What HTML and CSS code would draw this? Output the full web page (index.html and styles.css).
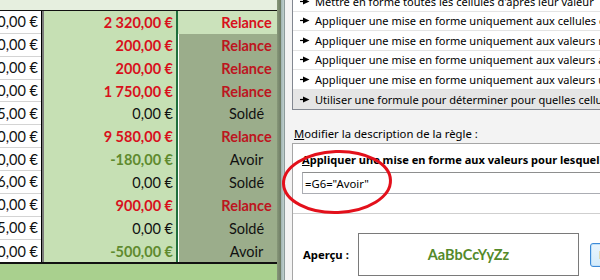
FILE: index.html
```html
<!DOCTYPE html>
<html lang="fr">
<head>
<meta charset="utf-8">
<link rel="stylesheet" href="styles.css">
</head>
<body>
<div class="screen">
  <div class="sheet">
    <div class="top"></div>
    <div class="grid">
      <div class="col col-a">
        <div class="cell">1 250,00 €</div>
        <div class="cell">1 200,00 €</div>
        <div class="cell">1 200,00 €</div>
        <div class="cell">1 750,00 €</div>
        <div class="cell">1 245,00 €</div>
        <div class="cell">9 580,00 €</div>
        <div class="cell">1 320,00 €</div>
        <div class="cell">1 256,00 €</div>
        <div class="cell">1 900,00 €</div>
        <div class="cell">1 125,00 €</div>
        <div class="cell">1 500,00 €</div>
      </div>
      <div class="col col-b">
        <div class="cell red">2 320,00 €</div>
        <div class="cell red">200,00 €</div>
        <div class="cell red">200,00 €</div>
        <div class="cell red">1 750,00 €</div>
        <div class="cell">0,00 €</div>
        <div class="cell red">9 580,00 €</div>
        <div class="cell green">-180,00 €</div>
        <div class="cell">0,00 €</div>
        <div class="cell red">900,00 €</div>
        <div class="cell">0,00 €</div>
        <div class="cell green">-500,00 €</div>
      </div>
      <div class="col col-c">
        <div class="cell active red">Relance</div>
        <div class="cell red">Relance</div>
        <div class="cell red">Relance</div>
        <div class="cell red">Relance</div>
        <div class="cell">Soldé</div>
        <div class="cell red">Relance</div>
        <div class="cell">Avoir</div>
        <div class="cell">Soldé</div>
        <div class="cell red">Relance</div>
        <div class="cell">Soldé</div>
        <div class="cell">Avoir</div>
      </div>
    </div>
    <div class="band"></div>
  </div>
  <div class="frame"><div class="shade"></div><div class="edge"></div></div>
  <div class="dialog">
    <div class="list">
      <div class="item"><svg class="arrow" viewBox="0 0 10 7" width="10" height="7"><path d="M0 3.5h4" stroke="#000" stroke-width="1.2"/><polygon points="3,0.5 9.5,3.5 3,6.5" fill="#000"/></svg>Mettre en forme toutes les cellules d'après leur valeur</div>
      <div class="item"><svg class="arrow" viewBox="0 0 10 7" width="10" height="7"><path d="M0 3.5h4" stroke="#000" stroke-width="1.2"/><polygon points="3,0.5 9.5,3.5 3,6.5" fill="#000"/></svg>Appliquer une mise en forme uniquement aux cellules contenant</div>
      <div class="item"><svg class="arrow" viewBox="0 0 10 7" width="10" height="7"><path d="M0 3.5h4" stroke="#000" stroke-width="1.2"/><polygon points="3,0.5 9.5,3.5 3,6.5" fill="#000"/></svg>Appliquer une mise en forme uniquement aux valeurs rangées parmi les premières</div>
      <div class="item"><svg class="arrow" viewBox="0 0 10 7" width="10" height="7"><path d="M0 3.5h4" stroke="#000" stroke-width="1.2"/><polygon points="3,0.5 9.5,3.5 3,6.5" fill="#000"/></svg>Appliquer une mise en forme uniquement aux valeurs au-dessus ou en dessous</div>
      <div class="item"><svg class="arrow" viewBox="0 0 10 7" width="10" height="7"><path d="M0 3.5h4" stroke="#000" stroke-width="1.2"/><polygon points="3,0.5 9.5,3.5 3,6.5" fill="#000"/></svg>Appliquer une mise en forme uniquement aux valeurs uniques ou aux doublons</div>
      <div class="item sel"><svg class="arrow" viewBox="0 0 10 7" width="10" height="7"><path d="M0 3.5h4" stroke="#000" stroke-width="1.2"/><polygon points="3,0.5 9.5,3.5 3,6.5" fill="#000"/></svg>Utiliser une formule pour déterminer pour quelles cellules le format sera appliqué</div>
    </div>
    <div class="label"><u>M</u>odifier la description de la règle :</div>
    <div class="group">
      <div class="heading"><u>A</u>ppliquer une mise en forme aux valeurs pour lesquelles cette formule est vraie :</div>
      <div class="input">=G6="Avoir"</div>
      <div class="sep"></div>
      <div class="preview-row">
        <span class="ap">Aperçu :</span>
        <div class="preview">AaBbCcYyZz</div>
        <div class="btn">Format...</div>
      </div>
    </div>
  </div>
  <svg class="circle" width="114" height="70" viewBox="0 0 114 70"><ellipse cx="56" cy="34" rx="53.5" ry="30.5" transform="rotate(-2 56 34)" fill="none" stroke="#e3101b" stroke-width="3"/></svg>
</div>
</body>
</html>
```

FILE: styles.css
```css
html, body { margin: 0; padding: 0; }
body { width: 600px; height: 280px; overflow: hidden; background: #f3f3f3; }
.screen { position: relative; display: flex; width: 600px; height: 280px; overflow: hidden; }

.sheet { width: 277px; height: 280px; flex: none; display: flex; flex-direction: column; overflow: hidden; }
.top { height: 10px; flex: none; background: #e6efdf; border-bottom: 1px solid #111; }
.grid { display: flex; flex: none; }
.col { display: flex; flex-direction: column; flex: none; box-sizing: border-box; }
.cell { height: 22.86px; box-sizing: border-box; display: flex; align-items: center; justify-content: flex-end; white-space: nowrap; font-family: Lato, "Liberation Sans", sans-serif; font-size: 14.5px; color: #111; padding-right: 3px; }
.cell.red { color: #d8101c; font-weight: 700; }
.cell.green { color: #5f8a2e; font-weight: 700; }

.col-a { width: 42px; background: #fff; border-right: 1px solid #000; overflow: hidden; }
.col-a .cell { border-bottom: 1px solid #d4d4d4; }
.col-a .cell:last-child { border-bottom: none; }
.col-b { width: 134px; background: #c6e0b4; border-left: 2px solid #7b7b7b; }
.col-c { width: 138px; background: #9bad8b; border-left: 2px solid #1f6e3c; box-shadow: inset 1px 0 #fff; }
.col-c .cell { justify-content: center; padding: 0 0 0 1px; }
.col-c .cell.red { color: #bd1520; }
.col-c .cell.active { background: #cbe2bb; color: #d8101c; }

.band { flex: 1; border-top: 2px solid #111; background: #a9d08e; }

.frame { width: 8px; flex: none; display: flex; }
.shade { width: 4px; background: linear-gradient(90deg, #879779, #6c7a63); }
.edge { width: 4px; background: linear-gradient(90deg, #9fb3b2, #bfcfcd); border-right: 1px solid #8c9a9a; }

.dialog { flex: 1; background: #f3f3f3; overflow: hidden; padding-left: 7px; font-family: "Noto Sans", sans-serif; font-size: 11.05px; color: #000; }
.list { width: 360px; margin-top: -8px; background: #fff; border: 1px solid #828790; border-top: none; }
.item { height: 19.5px; box-sizing: border-box; display: flex; align-items: center; gap: 5px; padding-left: 7px; white-space: nowrap; border-bottom: 1px solid #e4e4e4; }
.item:last-child { border-bottom: none; }
.item.sel { background: #e5e5e5; }
.arrow { flex: none; }

.label { margin-top: 16px; padding-left: 2px; line-height: 16px; white-space: nowrap; font-size: 11.3px; }
.group { margin-top: 1px; width: 360px; height: 200px; background: #fff; border-top: 1px solid #a6a6a6; border-left: 1px solid #a6a6a6; }
.heading { padding: 8px 0 0 9px; line-height: 16px; font-weight: 700; font-size: 11.05px; white-space: nowrap; }
.input { margin: 4px 0 0 9px; height: 22px; box-sizing: border-box; border: 1px solid #abadb3; border-top-color: #8e8f8f; padding-left: 2px; display: flex; align-items: center; white-space: nowrap; font-size: 11.3px; }
.sep { margin-top: 19px; height: 1px; background: #cfcfcf; }
.preview-row { display: flex; align-items: center; margin-top: 19px; padding-left: 10px; }
.ap { width: 55px; flex: none; font-weight: 700; font-size: 11.3px; }
.preview { width: 221px; height: 43px; box-sizing: border-box; flex: none; border: 1px solid #7a7a7a; display: flex; align-items: center; justify-content: center; font-family: Lato, sans-serif; font-weight: 700; font-size: 14.5px; color: #548a2a; }
.btn { margin-left: 11px; width: 80px; height: 24px; box-sizing: border-box; flex: none; border: 1px solid #3c8ad8; border-radius: 3px; background: linear-gradient(#eaf5fd, #d4ebfa); box-shadow: inset 0 0 0 1px #c0e0f8; display: flex; align-items: center; padding-left: 8px; }

.circle { position: absolute; left: 281px; top: 148px; }
```
